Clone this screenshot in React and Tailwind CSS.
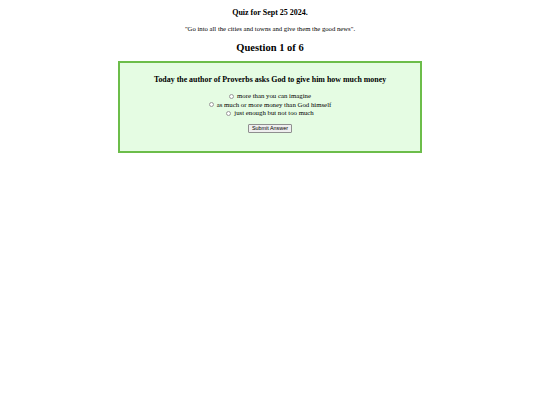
const options = [
  "more than you can imagine",
  "as much or more money than God himself",
  "just enough but not too much",
];

export default function App() {
  return (
    <div className="min-h-[405px] w-[540px] bg-white text-black" style={{ fontFamily: '"Liberation Serif", "Times New Roman", serif' }}>
      <div className="flex flex-col items-center pt-[8px]">
        <h4 className="text-[8px] leading-[10px] font-bold">Quiz for Sept 25 2024.</h4>
        <p className="mt-[7px] text-[6.7px] leading-[8px]">"Go into all the cities and towns and give them the good news".</p>
        <h3 className="mt-[8px] text-[10.5px] leading-[13px] font-bold">Question 1 of 6</h3>

        <div className="mt-[7px] flex h-[92px] w-[304px] flex-col items-center border-2 border-[#6cbd4a] bg-[#e5fce3] pt-[12px]">
          <h4 className="text-[7.9px] leading-[10px] font-bold">Today the author of Proverbs asks God to give him how much money</h4>
          <div className="mt-[7px] flex flex-col items-center text-[6.8px] leading-[8.6px]">
            {options.map((o) => (
              <label key={o} className="flex items-center gap-[3px]">
                <span className="inline-block h-[5px] w-[5px] rounded-full border-[0.6px] border-[#9a9a9a] bg-white" />
                <span>{o}</span>
              </label>
            ))}
          </div>
          <button
            className="mt-[6px] flex h-[9px] w-[44px] items-center justify-center rounded-[1px] border-[0.6px] border-[#8f8f8f] bg-[#efefef] text-[5.4px] leading-[6px] text-black"
            style={{ fontFamily: '"Liberation Sans", Arial, sans-serif' }}
          >
            Submit Answer
          </button>
        </div>
      </div>
    </div>
  );
}
